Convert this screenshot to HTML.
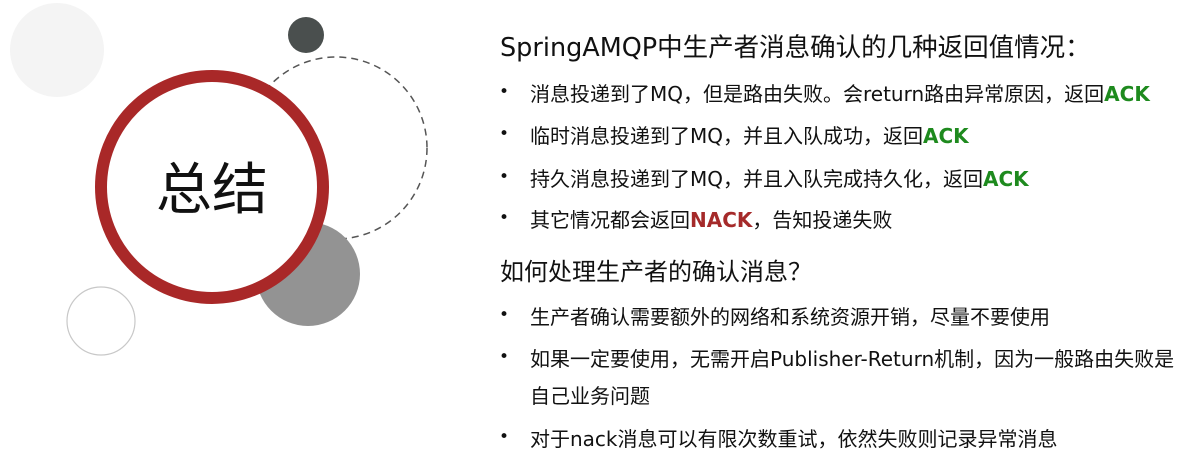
<!DOCTYPE html>
<html><head><meta charset="utf-8"><style>
body{margin:0;width:1199px;height:459px;background:#fff;overflow:hidden;position:relative;font-family:"DejaVu Sans","Noto Sans CJK SC",sans-serif;color:#111}
.t{position:absolute;white-space:nowrap}
.h{left:500px;font-size:25.5px}
.li{left:530px;font-size:20px;margin-top:-2px}
.b{position:absolute;left:499px;font-size:17px}
.g{color:#1e8a1e;font-weight:bold}.r{color:#a52a2a;font-weight:bold}
</style></head><body>
<svg width="460" height="459" style="position:absolute;left:0;top:0">
<circle cx="57" cy="50" r="47" fill="#f4f4f4"/>
<circle cx="306" cy="35" r="18" fill="#4a4f4e"/>
<circle cx="336" cy="148" r="91" fill="none" stroke="#555" stroke-width="1.5" stroke-dasharray="7,5"/>
<circle cx="308" cy="274" r="52" fill="#939393"/>
<circle cx="101" cy="321" r="34" fill="none" stroke="#c8c8c8" stroke-width="1.2"/>
<circle cx="212" cy="187" r="111" fill="#fff" stroke="#a92828" stroke-width="12"/>
<text x="212" y="209" font-size="56" text-anchor="middle" font-family="Noto Sans CJK SC,sans-serif" fill="#111">总结</text>
</svg>
<div class="t h" style="top:27px">SpringAMQP中生产者消息确认的几种返回值情况：</div>
<div class="b" style="top:82px">•</div><div class="t li" style="top:80px">消息投递到了MQ，但是路由失败。会return路由异常原因，返回<span class="g">ACK</span></div>
<div class="b" style="top:124px">•</div><div class="t li" style="top:122px">临时消息投递到了MQ，并且入队成功，返回<span class="g">ACK</span></div>
<div class="b" style="top:167px">•</div><div class="t li" style="top:165px">持久消息投递到了MQ，并且入队完成持久化，返回<span class="g">ACK</span></div>
<div class="b" style="top:208px">•</div><div class="t li" style="top:206px">其它情况都会返回<span class="r">NACK</span>，告知投递失败</div>
<div class="t h" style="top:252px;font-size:24px">如何处理生产者的确认消息？</div>
<div class="b" style="top:305px">•</div><div class="t li" style="top:303px">生产者确认需要额外的网络和系统资源开销，尽量不要使用</div>
<div class="b" style="top:347px">•</div><div class="t li" style="top:345px">如果一定要使用，无需开启Publisher-Return机制，因为一般路由失败是</div>
<div class="t li" style="top:382px">自己业务问题</div>
<div class="b" style="top:427px">•</div><div class="t li" style="top:425px">对于nack消息可以有限次数重试，依然失败则记录异常消息</div>
</body></html>
